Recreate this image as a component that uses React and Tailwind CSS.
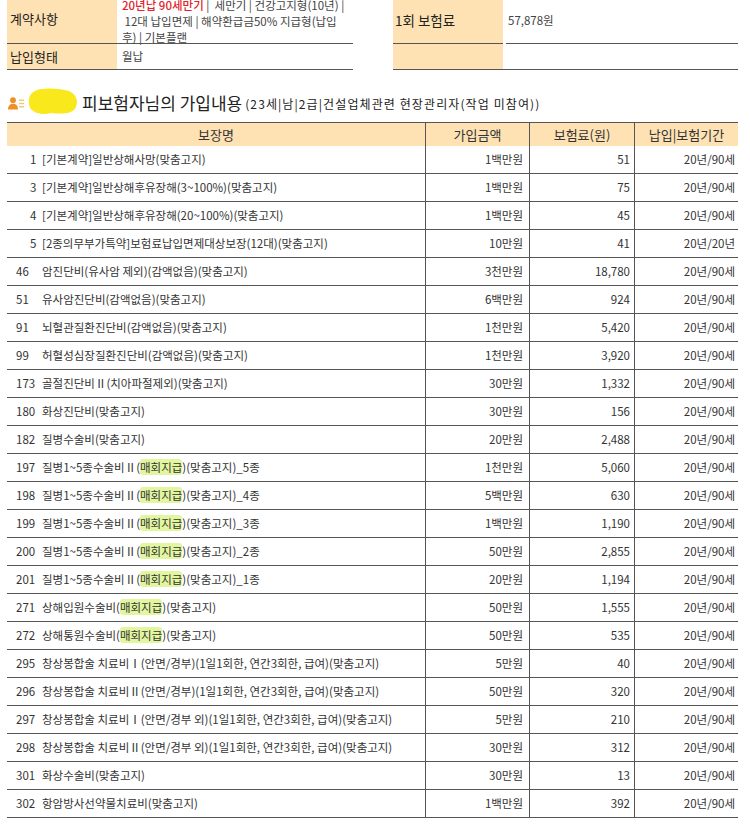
import React from "react";

const rows = [
  { n: 1, name: "[기본계약]일반상해사망(맞춤고지)", amt: "1백만원", prem: "51", term: "20년/90세" },
  { n: 3, name: "[기본계약]일반상해후유장해(3~100%)(맞춤고지)", amt: "1백만원", prem: "75", term: "20년/90세" },
  { n: 4, name: "[기본계약]일반상해후유장해(20~100%)(맞춤고지)", amt: "1백만원", prem: "45", term: "20년/90세" },
  { n: 5, name: "[2종의무부가특약]보험료납입면제대상보장(12대)(맞춤고지)", amt: "10만원", prem: "41", term: "20년/20년" },
  { n: 46, name: "암진단비(유사암 제외)(감액없음)(맞춤고지)", amt: "3천만원", prem: "18,780", term: "20년/90세" },
  { n: 51, name: "유사암진단비(감액없음)(맞춤고지)", amt: "6백만원", prem: "924", term: "20년/90세" },
  { n: 91, name: "뇌혈관질환진단비(감액없음)(맞춤고지)", amt: "1천만원", prem: "5,420", term: "20년/90세" },
  { n: 99, name: "허혈성심장질환진단비(감액없음)(맞춤고지)", amt: "1천만원", prem: "3,920", term: "20년/90세" },
  { n: 173, name: "골절진단비Ⅱ(치아파절제외)(맞춤고지)", amt: "30만원", prem: "1,332", term: "20년/90세" },
  { n: 180, name: "화상진단비(맞춤고지)", amt: "30만원", prem: "156", term: "20년/90세" },
  { n: 182, name: "질병수술비(맞춤고지)", amt: "20만원", prem: "2,488", term: "20년/90세" },
  { n: 197, name: "질병1~5종수술비Ⅱ(매회지급)(맞춤고지)_5종", amt: "1천만원", prem: "5,060", term: "20년/90세" },
  { n: 198, name: "질병1~5종수술비Ⅱ(매회지급)(맞춤고지)_4종", amt: "5백만원", prem: "630", term: "20년/90세" },
  { n: 199, name: "질병1~5종수술비Ⅱ(매회지급)(맞춤고지)_3종", amt: "1백만원", prem: "1,190", term: "20년/90세" },
  { n: 200, name: "질병1~5종수술비Ⅱ(매회지급)(맞춤고지)_2종", amt: "50만원", prem: "2,855", term: "20년/90세" },
  { n: 201, name: "질병1~5종수술비Ⅱ(매회지급)(맞춤고지)_1종", amt: "20만원", prem: "1,194", term: "20년/90세" },
  { n: 271, name: "상해입원수술비(매회지급)(맞춤고지)", amt: "50만원", prem: "1,555", term: "20년/90세" },
  { n: 272, name: "상해통원수술비(매회지급)(맞춤고지)", amt: "50만원", prem: "535", term: "20년/90세" },
  { n: 295, name: "창상봉합술 치료비Ⅰ(안면/경부)(1일1회한, 연간3회한, 급여)(맞춤고지)", amt: "5만원", prem: "40", term: "20년/90세" },
  { n: 296, name: "창상봉합술 치료비Ⅱ(안면/경부)(1일1회한, 연간3회한, 급여)(맞춤고지)", amt: "50만원", prem: "320", term: "20년/90세" },
  { n: 297, name: "창상봉합술 치료비Ⅰ(안면/경부 외)(1일1회한, 연간3회한, 급여)(맞춤고지)", amt: "5만원", prem: "210", term: "20년/90세" },
  { n: 298, name: "창상봉합술 치료비Ⅱ(안면/경부 외)(1일1회한, 연간3회한, 급여)(맞춤고지)", amt: "30만원", prem: "312", term: "20년/90세" },
  { n: 301, name: "화상수술비(맞춤고지)", amt: "30만원", prem: "13", term: "20년/90세" },
  { n: 302, name: "항암방사선약물치료비(맞춤고지)", amt: "1백만원", prem: "392", term: "20년/90세" },
];

function Name({ text }) {
  const key = "매회지급";
  const i = text.indexOf(key);
  if (i < 0) return <span>{text}</span>;
  return (
    <span>
      {text.slice(0, i)}
      <span className="bg-[#e2f6a0] rounded-[3px]">{key}</span>
      {text.slice(i + key.length)}
    </span>
  );
}

function PersonIcon() {
  return (
    <svg width="17" height="13" viewBox="0 0 17 13">
      <circle cx="5" cy="3.2" r="2.9" fill="#ef8f26" />
      <path d="M0 12.5 C0 8.5 2.4 6.8 5 6.8 C7.6 6.8 10 8.5 10 12.5 Z" fill="#ef8f26" />
      <rect x="11" y="2.5" width="5" height="1.4" fill="#f6c572" />
      <rect x="11" y="5.8" width="5" height="1.4" fill="#f6c572" />
      <rect x="11" y="9.1" width="5" height="1.4" fill="#f6c572" />
    </svg>
  );
}

function Blob() {
  return (
    <svg width="50" height="28" viewBox="0 0 50 28">
      <path
        d="M7 3 C15 -1 30 0.5 39 2.5 C48 4.5 51 13 47.5 20 C44 26.5 31 26 23 25 C13 27.5 2.5 25 1 16.5 C0 10 2 5.5 7 3 Z"
        fill="#f8e81c"
      />
    </svg>
  );
}

export default function App() {
  return (
    <div className="w-[750px] h-[829px] overflow-hidden bg-white text-[#333] font-['Noto_Sans_CJK_KR',sans-serif]">
      {/* Top contract tables */}
      <div className="flex gap-[40px] pl-[7px] mt-[-5px]">
        <div className="w-[346px]">
          <div className="flex h-[49px] border-b border-[#555]">
            <div className="w-[110px] bg-[#fee2b3] flex items-center pl-[3px] text-[13px] text-[#222]">계약사항</div>
            <div className="flex-1 pl-[5px] pt-[2px] text-[11.5px] leading-[16px] text-[#444] whitespace-nowrap">
              <div>
                <span className="text-[#e3242b] font-medium">20년납 90세만기</span> | &nbsp;세만기 | 건강고지형(10년) |
              </div>
              <div>&nbsp;12대 납입면제 | 해약환급금50% 지급형(납입</div>
              <div>후) | 기본플랜</div>
            </div>
          </div>
          <div className="flex h-[26px] border-b border-[#555]">
            <div className="w-[110px] bg-[#fee2b3] flex items-center pl-[3px] text-[13px] text-[#222]">납입형태</div>
            <div className="flex-1 pl-[5px] flex items-center text-[11.5px] text-[#444]">월납</div>
          </div>
        </div>
        <div className="w-[345px]">
          <div className="flex h-[49px]">
            <div className="w-[110px] bg-[#fee2b3] border-b border-[#555] flex items-center pl-[2px] pt-[3px] text-[13.5px] text-[#222]">1회 보험료</div>
            <div className="flex-1 ml-[3px] border-b border-[#555] pl-[2px] pt-[3px] flex items-center text-[11.5px] text-[#444]">57,878원</div>
          </div>
          <div className="flex h-[26px] border-b border-[#555]">
            <div className="w-[110px] bg-[#fee2b3]"></div>
            <div className="flex-1"></div>
          </div>
        </div>
      </div>

      {/* Heading */}
      <div className="h-[52px] flex items-center pt-[14px] pl-[8px] whitespace-nowrap">
        <PersonIcon />
        <div className="ml-[3px] mt-[-3px]">
          <Blob />
        </div>
        <span className="ml-[4px] text-[17px] text-[#222]">피보험자님의 가입내용</span>
        <span className="ml-[3px] text-[12px] tracking-[1.1px] text-[#222] mt-[2px]">(23세|남|2급|건설업체관련 현장관리자(작업 미참여))</span>
      </div>

      {/* Main table */}
      <div className="ml-[7px] w-[731px]">
        <div className="grid grid-cols-[418px_104px_105px_104px] h-[24px] border-t border-[#555] bg-[#fee2b3] text-[13px] text-[#333]">
          <div className="flex items-center justify-center">보장명</div>
          <div className="flex items-center justify-center border-l border-[#555]">가입금액</div>
          <div className="flex items-center justify-center border-l border-[#555]">보험료(원)</div>
          <div className="flex items-center justify-center border-l border-[#555]">납입|보험기간</div>
        </div>
        {rows.map((r) => (
          <div
            key={r.n}
            className="grid grid-cols-[418px_104px_105px_104px] h-[28px] border-b border-[#555] text-[11.5px] text-[#333]"
          >
            <div className="flex items-center pl-[9px] whitespace-nowrap overflow-hidden">
              <span className={r.n < 10 ? "w-[26px] shrink-0 pl-[14px]" : "w-[26px] shrink-0"}>{r.n}</span>
              <Name text={r.name} />
            </div>
            <div className="flex items-center justify-end pr-[6px] border-l border-[#555]">{r.amt}</div>
            <div className="flex items-center justify-end pr-[4px] border-l border-[#555]">{r.prem}</div>
            <div className="flex items-center justify-end pr-[3px] border-l border-[#555]">{r.term}</div>
          </div>
        ))}
      </div>
    </div>
  );
}
